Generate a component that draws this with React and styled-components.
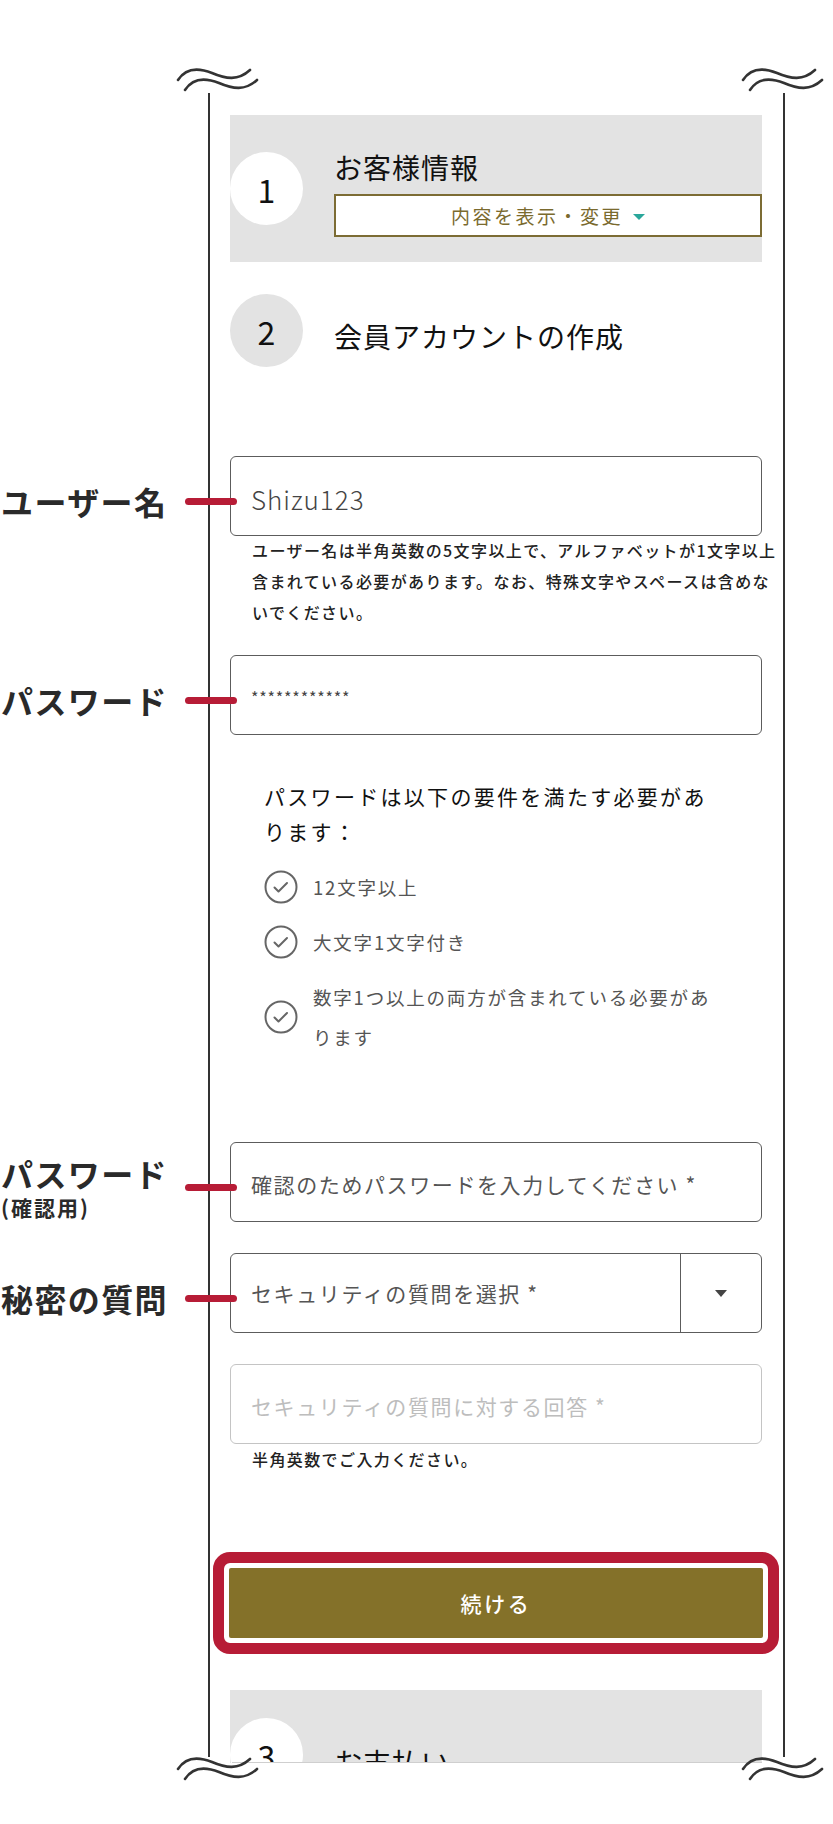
import React from 'react'
import styled, { createGlobalStyle } from 'styled-components'

const GlobalStyle = createGlobalStyle`
  html, body {
    margin: 0;
    padding: 0;
    background: #ffffff;
  }
  body {
    font-family: "Noto Sans CJK JP", "Noto Sans", sans-serif;
    color: #111;
  }
  * {
    box-sizing: border-box;
  }
`

const FONT = `"Noto Sans CJK JP", "Noto Sans", sans-serif`

const Page = styled.div`
  position: relative;
  width: 833px;
  height: 1824px;
  padding-top: 93px;
  overflow: hidden;
  background: #fff;
`

const Frame = styled.div`
  position: relative;
  margin-left: 208px;
  width: 577px;
  height: 1664px;
  border-left: 2px solid #333;
  border-right: 2px solid #333;
`

// only the bottom edge is cut; callouts may still reach out to the left
const Viewport = styled.div`
  position: relative;
  height: 1670px;
  padding: 22px 21px 0 20px;
  clip-path: inset(-200px -300px 0 -300px);
  display: flex;
  flex-direction: column;

  &::after {
    content: '';
    position: absolute;
    left: 22px;
    right: 21px;
    bottom: 0;
    height: 1px;
    background: #cfcfcf;
  }
`

const TildeMark = styled.svg`
  position: absolute;
  z-index: 3;
  width: 86px;
  height: 32px;
  left: ${p => p.$left}px;
  top: ${p => p.$top}px;
`

const StepBox = styled.div`
  display: flex;
  flex: none;
  align-items: ${p => (p.$cut ? 'flex-start' : 'center')};
  height: ${p => (p.$cut ? 129 : 147)}px;
  padding-top: ${p => (p.$cut ? 28 : 0)}px;
  margin-top: ${p => p.$mt || 0}px;
  background: #e3e3e3;
`

const StepRow = styled.div`
  display: flex;
  align-items: center;
  height: 73px;
  margin-top: 32px;
`

const StepCircle = styled.div`
  flex: none;
  width: 73px;
  height: 73px;
  border-radius: 50%;
  background: ${p => (p.$tone === 'gray' ? '#e3e3e3' : '#ffffff')};
  display: flex;
  align-items: center;
  justify-content: center;
  font-size: 32px;
  color: #111;
  line-height: 1;
`

const StepBody = styled.div`
  flex: 1;
  display: flex;
  flex-direction: column;
  margin-left: 31px;
  padding-top: ${p => p.$pt || 0}px;
`

const StepTitle = styled.div`
  font-size: 28px;
  line-height: 36px;
  letter-spacing: 1px;
  color: #111;
  padding-top: ${p => p.$pt || 0}px;
  margin-left: ${p => p.$ml || 0}px;
  white-space: nowrap;
`

const ToggleButton = styled.button`
  margin-top: 9px;
  height: 43px;
  width: 100%;
  border: 2px solid #7c6c34;
  background: #fff;
  display: flex;
  align-items: center;
  justify-content: center;
  gap: 10px;
  font-family: ${FONT};
  font-size: 19px;
  letter-spacing: 2.5px;
  color: #7a6a2e;
  padding: 0;
  cursor: pointer;
`

const Caret = styled.span`
  width: 0;
  height: 0;
  border-left: 6px solid transparent;
  border-right: 6px solid transparent;
  border-top: 6px solid #2aa79b;
  margin-top: 2px;
`

const Field = styled.div`
  position: relative;
  margin-top: ${p => p.$mt || 0}px;
`

const TextInput = styled.input`
  display: block;
  width: 100%;
  height: 80px;
  border: 1.5px solid ${p => (p.$soft ? '#c4c4c4' : '#5c5c5c')};
  border-radius: 6px;
  padding: 4px 20px 0;
  background: #fff;
  font-family: ${FONT};
  font-size: ${p => p.$size || 21}px;
  font-weight: ${p => p.$weight || 400};
  letter-spacing: ${p => p.$ls ?? 1.6}px;
  color: #444;
  outline: none;

  &::placeholder {
    color: ${p => (p.$soft ? '#bdbdbd' : '#555')};
    opacity: 1;
  }
`

const SelectBox = styled.div`
  display: flex;
  height: 80px;
  border: 1.5px solid #5c5c5c;
  border-radius: 6px;
  background: #fff;
`

const SelectText = styled.div`
  flex: 1;
  display: flex;
  align-items: center;
  padding: 0 20px;
  font-size: 21px;
  letter-spacing: 1.6px;
  color: #555;
`

const SelectArrow = styled.div`
  flex: none;
  width: 81px;
  border-left: 1.5px solid #5c5c5c;
  display: flex;
  align-items: center;
  justify-content: center;

  &::before {
    content: '';
    width: 0;
    height: 0;
    border-left: 6px solid transparent;
    border-right: 6px solid transparent;
    border-top: 7px solid #444;
  }
`

const Callout = styled.div`
  position: absolute;
  z-index: 2;
  right: calc(100% - 7px);
  top: 50%;
  transform: translateY(calc(-50% + 5px));
  display: flex;
  align-items: center;
  gap: 16px;
`

const CalloutText = styled.div`
  width: 168px;
  font-size: 32px;
  font-weight: 700;
  line-height: 36px;
  letter-spacing: 1.4px;
  color: #2a2a2a;
  white-space: nowrap;
`

const CalloutSub = styled.div`
  margin-top: 4px;
  font-size: 21px;
  line-height: 24px;
  letter-spacing: 2px;
`

const CalloutMark = styled.span`
  flex: none;
  width: 52px;
  height: 7px;
  border-radius: 4px;
  background: #b71c36;
`

const Helper = styled.p`
  margin: ${p => p.$mt || 0}px 0 0 22px;
  font-size: 16px;
  font-weight: 500;
  line-height: 31px;
  letter-spacing: 1.4px;
  color: #222;
  white-space: nowrap;
`

const Requirements = styled.div`
  margin-top: 44px;
  padding-left: 34px;
`

const ReqTitle = styled.p`
  margin: 0;
  font-size: 21px;
  line-height: 35px;
  letter-spacing: 2.3px;
  color: #111;
  white-space: nowrap;
`

const ReqList = styled.ul`
  list-style: none;
  margin: 18px 0 0;
  padding: 0;
  display: flex;
  flex-direction: column;
  gap: 15px;
`

const ReqItem = styled.li`
  display: flex;
  align-items: center;
  gap: 15px;
`

const ReqText = styled.span`
  font-size: 18.5px;
  line-height: 40px;
  letter-spacing: 1.8px;
  color: #555;
  white-space: nowrap;
`

const ContinueFrame = styled.div`
  flex: none;
  margin: 77px -17px 0;
  border: 11px solid #b71c36;
  border-radius: 17px;
  padding: 5px;
  background: #fff;
`

const ContinueButton = styled.button`
  display: block;
  width: 100%;
  height: 70px;
  border: none;
  border-radius: 2px;
  background: #847129;
  color: #fff;
  font-family: ${FONT};
  font-size: 21px;
  font-weight: 500;
  letter-spacing: 2.7px;
  cursor: pointer;
`

function Tilde({ left, top }) {
  return (
    <TildeMark $left={left} $top={top} viewBox="0 0 86 32" fill="none">
      <path
        d="M3 17 C10 6 22 4 37 10 C51 16 63 18 75 7"
        stroke="#333"
        strokeWidth="2.6"
        strokeLinecap="round"
      />
      <path
        d="M10 27 C17 16 29 14 44 20 C58 26 70 28 82 17"
        stroke="#333"
        strokeWidth="2.6"
        strokeLinecap="round"
      />
    </TildeMark>
  )
}

function CheckIcon() {
  return (
    <svg width="34" height="34" viewBox="0 0 34 34" fill="none">
      <circle cx="17" cy="17" r="15.5" stroke="#666" strokeWidth="2" />
      <path
        d="M10.5 17.5 L14.5 21.5 L23 13"
        stroke="#666"
        strokeWidth="2"
        strokeLinecap="round"
        strokeLinejoin="round"
      />
    </svg>
  )
}

function Label({ children, sub }) {
  return (
    <Callout>
      <CalloutText>
        {children}
        {sub && <CalloutSub>{sub}</CalloutSub>}
      </CalloutText>
      <CalloutMark />
    </Callout>
  )
}

const requirements = [
  ['12文字以上'],
  ['大文字1文字付き'],
  ['数字1つ以上の両方が含まれている必要があ', 'ります'],
]

export default function App() {
  return (
    <>
      <GlobalStyle />
      <Page>
        <Frame>
          <Tilde left={-35} top={-30} />
          <Tilde left={530} top={-30} />
          <Tilde left={-35} top={1659} />
          <Tilde left={530} top={1659} />

          <Viewport>
            <StepBox>
              <StepCircle>1</StepCircle>
              <StepBody $pt={9}>
                <StepTitle>お客様情報</StepTitle>
                <ToggleButton type="button">
                  内容を表示・変更
                  <Caret />
                </ToggleButton>
              </StepBody>
            </StepBox>

            <StepRow>
              <StepCircle $tone="gray">2</StepCircle>
              <StepTitle $ml={31} $pt={10}>
                会員アカウントの作成
              </StepTitle>
            </StepRow>

            <Field $mt={89}>
              <Label>ユーザー名</Label>
              <TextInput readOnly value="Shizu123" $size={26} $weight={300} $ls={1} />
            </Field>
            <Helper $mt={-1}>
              ユーザー名は半角英数の5文字以上で、アルファベットが1文字以上
              <br />
              含まれている必要があります。なお、特殊文字やスペースは含めな
              <br />
              いでください。
            </Helper>

            <Field $mt={27}>
              <Label>パスワード</Label>
              <TextInput readOnly value="************" $size={16} $ls={0.8} />
            </Field>

            <Requirements>
              <ReqTitle>
                パスワードは以下の要件を満たす必要があ
                <br />
                ります：
              </ReqTitle>
              <ReqList>
                {requirements.map(lines => (
                  <ReqItem key={lines[0]}>
                    <CheckIcon />
                    <ReqText>
                      {lines.map((line, i) => (
                        <React.Fragment key={line}>
                          {i > 0 && <br />}
                          {line}
                        </React.Fragment>
                      ))}
                    </ReqText>
                  </ReqItem>
                ))}
              </ReqList>
            </Requirements>

            <Field $mt={85}>
              <Label sub="(確認用)">パスワード</Label>
              <TextInput placeholder="確認のためパスワードを入力してください *" />
            </Field>

            <Field $mt={31}>
              <Label>秘密の質問</Label>
              <SelectBox>
                <SelectText>セキュリティの質問を選択 *</SelectText>
                <SelectArrow />
              </SelectBox>
            </Field>

            <Field $mt={31}>
              <TextInput $soft placeholder="セキュリティの質問に対する回答 *" />
            </Field>
            <Helper>半角英数でご入力ください。</Helper>

            <ContinueFrame>
              <ContinueButton type="button">続ける</ContinueButton>
            </ContinueFrame>

            <StepBox $cut $mt={36}>
              <StepCircle>3</StepCircle>
              <StepBody $pt={26}>
                <StepTitle>お支払い</StepTitle>
              </StepBody>
            </StepBox>
          </Viewport>
        </Frame>
      </Page>
    </>
  )
}
